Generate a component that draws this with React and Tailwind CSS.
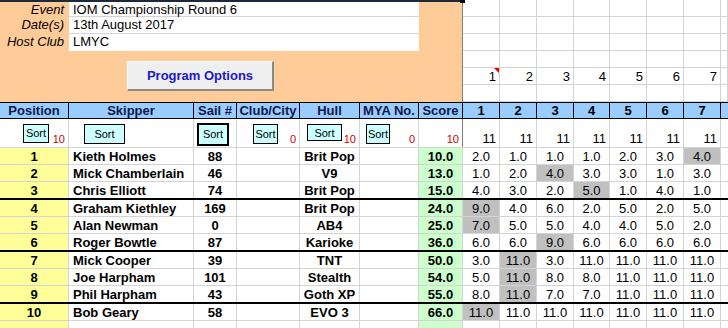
import React from "react";

const results = [
  [1, "Kieth Holmes", "88", "Brit Pop", "10.0", ["2.0", "1.0", "1.0", "1.0", "2.0", "3.0", "4.0"], 6],
  [2, "Mick Chamberlain", "46", "V9", "13.0", ["1.0", "2.0", "4.0", "3.0", "3.0", "1.0", "3.0"], 2],
  [3, "Chris Elliott", "74", "Brit Pop", "15.0", ["4.0", "3.0", "2.0", "5.0", "1.0", "4.0", "1.0"], 3],
  [4, "Graham Kiethley", "169", "Brit Pop", "24.0", ["9.0", "4.0", "6.0", "2.0", "5.0", "2.0", "5.0"], 0],
  [5, "Alan Newman", "0", "AB4", "25.0", ["7.0", "5.0", "5.0", "4.0", "4.0", "5.0", "2.0"], 0],
  [6, "Roger Bowtle", "87", "Karioke", "36.0", ["6.0", "6.0", "9.0", "6.0", "6.0", "6.0", "6.0"], 2],
  [7, "Mick Cooper", "39", "TNT", "50.0", ["3.0", "11.0", "3.0", "11.0", "11.0", "11.0", "11.0"], 1],
  [8, "Joe Harpham", "101", "Stealth", "54.0", ["5.0", "11.0", "8.0", "8.0", "11.0", "11.0", "11.0"], 1],
  [9, "Phil Harpham", "43", "Goth XP", "55.0", ["8.0", "11.0", "7.0", "7.0", "11.0", "11.0", "11.0"], 1],
  [10, "Bob Geary", "58", "EVO 3", "66.0", ["11.0", "11.0", "11.0", "11.0", "11.0", "11.0", "11.0"], 0],
];

const races = [1, 2, 3, 4, 5, 6, 7];

const COLS =
  "grid grid-cols-[69px_125px_43px_63px_60px_59px_44px_37px_37px_37px_36px_37px_37px_37px_1fr]";

const cell = "border-r border-[#d4d4d4] leading-[15px] pt-px whitespace-nowrap overflow-hidden";
const scoreCell = "border-r border-[#7f7f7f] bg-[#ccffcc]";

const SortButton = ({ className }) => (
  <div
    className={`flex items-center justify-center bg-[#ccffff] border border-black text-[11px] leading-none text-black ${className}`}
  >
    Sort
  </div>
);

const Red = ({ children }) => (
  <span className="ml-auto self-end pr-[3px] pb-[2px] text-[11px] leading-[12px] text-[#cc0000]">
    {children}
  </span>
);

const App = () => {
  return (
    <div className="w-[728px] h-[328px] overflow-hidden bg-white text-[13px] text-black font-['Liberation_Sans',Arial,sans-serif]">
      {/* EVENT INFO + RACE NUMBERS */}
      <div className="relative flex h-[102px]">
        <div className="w-[463px] h-[102px] bg-[#ffcc99] border-t-2 border-t-[#1d2838] border-r border-r-[#7f7f7f]">
          {[
            ["Event", "IOM Championship Round 6"],
            ["Date(s)", "13th August 2017"],
            ["Host Club", "LMYC"],
          ].map(([label, value], i) => (
            <div key={label} className={`flex ${i === 0 ? "h-[15px]" : "h-[17px]"}`}>
              <div className="w-[69px] pr-[5px] text-right italic leading-[15px] whitespace-nowrap">
                {label}
              </div>
              <div
                className={`w-[350px] bg-white pl-[4px] leading-[15px] ${
                  i < 2 ? "border-b border-[#d4d4d4]" : ""
                }`}
              >
                {value}
              </div>
            </div>
          ))}
          <button className="mt-[10px] ml-[127px] w-[147px] h-[30px] flex items-center justify-center bg-[#efefef] border-t border-l border-t-white border-l-white border-b-2 border-r-2 border-b-[#8a8a8a] border-r-[#8a8a8a] font-bold text-[13px] text-[#1a1ac8]">
            Program Options
          </button>
        </div>

        <div className="flex-1 grid grid-cols-[37px_37px_37px_36px_37px_37px_37px_1fr] grid-rows-[17px_17px_17px_17px_17px_17px]">
          {Array.from({ length: 6 }).map((_, r) =>
            Array.from({ length: 8 }).map((_, c) => (
              <div
                key={`${r}-${c}`}
                className="relative border-r border-b border-[#d4d4d4] text-right pr-[3px] leading-[15px] pt-px"
              >
                {r === 4 && c < 7 ? c + 1 : ""}
                {r === 4 && c === 0 && (
                  <span className="absolute top-0 right-0 w-0 h-0 border-l-[5px] border-l-transparent border-t-[5px] border-t-[#e00000]"></span>
                )}
              </div>
            ))
          )}
        </div>

        {/* selection handle */}
        <div className="absolute left-[460px] top-0 w-[5px] h-[3px] bg-black"></div>
      </div>

      {/* HEADER */}
      <div className={`${COLS} h-[17px] border-y border-black bg-[#99ccff] font-bold text-[#101848] text-center leading-[15px]`}>
        {["Position", "Skipper", "Sail #", "Club/City", "Hull", "MYA No.", "Score"].map((h) => (
          <div key={h} className="border-r border-black whitespace-nowrap overflow-hidden">
            {h}
          </div>
        ))}
        {races.map((r) => (
          <div key={r} className="border-r border-black text-black">
            {r}
          </div>
        ))}
        <div></div>
      </div>

      {/* SORT ROW */}
      <div className={`${COLS} h-[29px] border-b border-[#d4d4d4]`}>
        <div className="flex border-r border-[#d4d4d4]">
          <SortButton className="ml-[23px] mt-[5px] w-[26px] h-[19px]" />
          <Red>10</Red>
        </div>
        <div className="flex border-r border-[#d4d4d4]">
          <SortButton className="ml-[15px] mt-[5px] w-[41px] h-[20px]" />
        </div>
        <div className="flex border-r border-[#d4d4d4]">
          <SortButton className="ml-[3px] mt-[4px] w-[32px] h-[23px] border-2" />
        </div>
        <div className="flex border-r border-[#d4d4d4]">
          <SortButton className="ml-[16px] mt-[5px] w-[25px] h-[20px]" />
          <Red>0</Red>
        </div>
        <div className="flex border-r border-[#d4d4d4]">
          <SortButton className="ml-[7px] mt-[5px] w-[35px] h-[17px] items-start pt-[3px]" />
          <Red>10</Red>
        </div>
        <div className="flex border-r border-[#d4d4d4]">
          <SortButton className="ml-[6px] mt-[5px] w-[24px] h-[20px]" />
          <Red>0</Red>
        </div>
        <div className="flex border-r border-[#7f7f7f]">
          <Red>10</Red>
        </div>
        {races.map((r) => (
          <div key={r} className="flex items-end justify-end pr-[3px] pb-[1px] border-r border-[#d4d4d4] leading-[15px]">
            11
          </div>
        ))}
        <div></div>
      </div>

      {/* RESULTS */}
      {results.map(([pos, name, sail, hull, score, scores, drop]) => {
        const thick = pos % 3 === 0;
        return (
          <div
            key={pos}
            className={`${COLS} ${thick ? "h-[18px] border-b-2 border-black" : "h-[17px] border-b border-[#d4d4d4]"}`}
          >
            <div className={`${cell} bg-[#ffff99] text-center font-bold`}>{pos}</div>
            <div className={`${cell} pl-[4px] font-bold`}>{name}</div>
            <div className={`${cell} text-center font-bold`}>{sail}</div>
            <div className={cell}></div>
            <div className={`${cell} text-center font-bold`}>{hull}</div>
            <div className={cell}></div>
            <div className={`${cell} ${scoreCell} text-center font-bold`}>{score}</div>
            {scores.map((s, i) => (
              <div key={i} className={`${cell} text-center ${i === drop ? "bg-[#c0c0c0]" : ""}`}>
                {s}
              </div>
            ))}
            <div></div>
          </div>
        );
      })}

      {/* EMPTY ROW */}
      <div className={`${COLS} h-[17px] border-b border-[#d4d4d4]`}>
        <div className={`${cell} bg-[#ffff99]`}></div>
        <div className={cell}></div>
        <div className={cell}></div>
        <div className={cell}></div>
        <div className={cell}></div>
        <div className={cell}></div>
        <div className={`${cell} ${scoreCell}`}></div>
        {races.map((r) => (
          <div key={r} className={cell}></div>
        ))}
        <div></div>
      </div>
    </div>
  );
};

export default App;
